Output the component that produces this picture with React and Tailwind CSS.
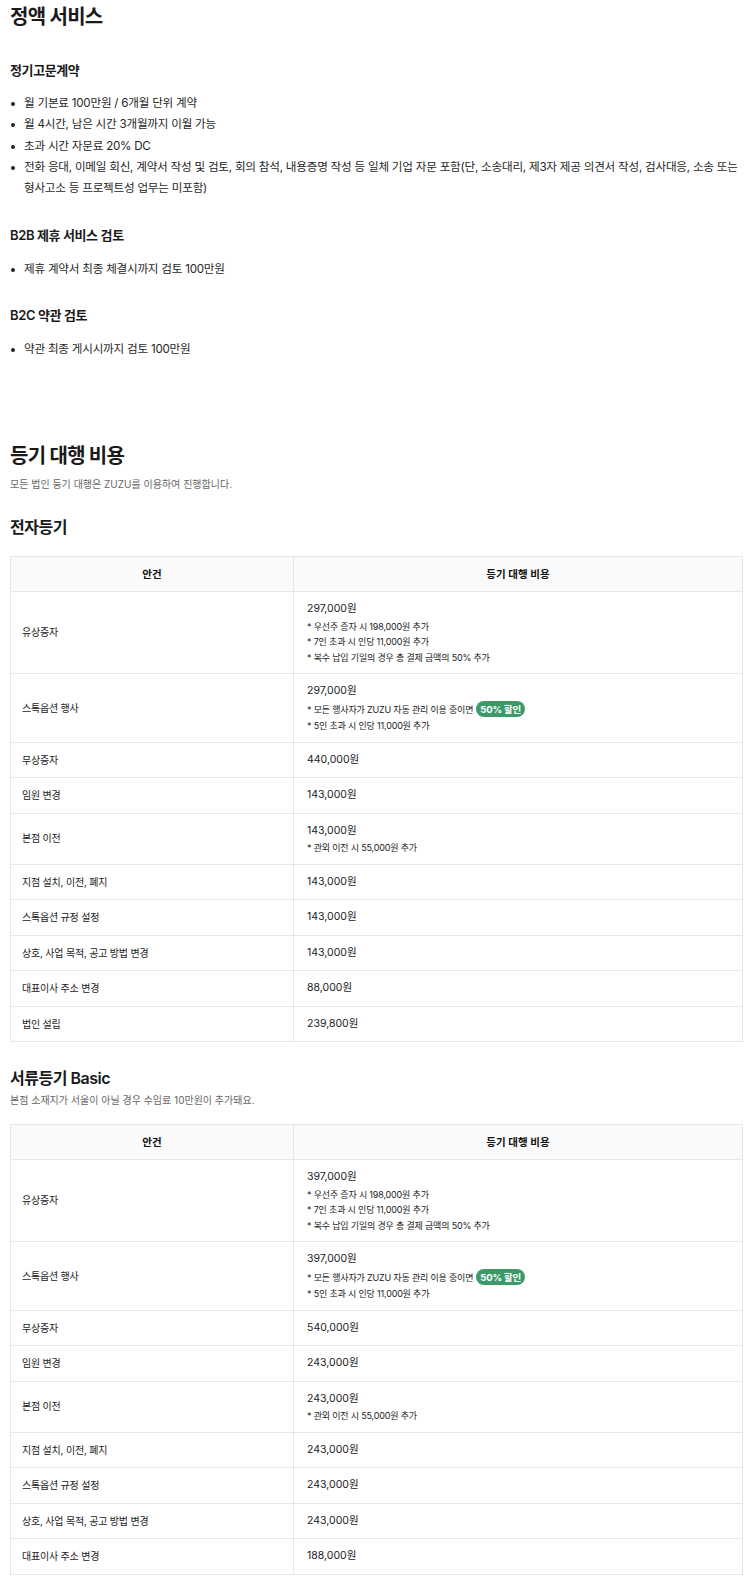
const FONT = { fontFamily: 'Inter, "Noto Sans CJK KR", sans-serif' };

const retainer = [
  "월 기본료 100만원 / 6개월 단위 계약",
  "월 4시간, 남은 시간 3개월까지 이월 가능",
  "초과 시간 자문료 20% DC",
  "전화 응대, 이메일 회신, 계약서 작성 및 검토, 회의 참석, 내용증명 작성 등 일체 기업 자문 포함(단, 소송대리, 제3자 제공 의견서 작성, 검사대응, 소송 또는 형사고소 등 프로젝트성 업무는 미포함)",
];

const electronic = [
  { name: "유상증자", price: "297,000원", notes: ["우선주 증자 시 198,000원 추가", "7인 초과 시 인당 11,000원 추가", "복수 납입 기일의 경우 총 결제 금액의 50% 추가"] },
  { name: "스톡옵션 행사", price: "297,000원", badge: true, notes: ["모든 행사자가 ZUZU 자동 관리 이용 중이면", "5인 초과 시 인당 11,000원 추가"] },
  { name: "무상증자", price: "440,000원" },
  { name: "임원 변경", price: "143,000원" },
  { name: "본점 이전", price: "143,000원", notes: ["관외 이전 시 55,000원 추가"] },
  { name: "지점 설치, 이전, 폐지", price: "143,000원" },
  { name: "스톡옵션 규정 설정", price: "143,000원" },
  { name: "상호, 사업 목적, 공고 방법 변경", price: "143,000원" },
  { name: "대표이사 주소 변경", price: "88,000원" },
  { name: "법인 설립", price: "239,800원" },
];

const paper = [
  { name: "유상증자", price: "397,000원", notes: ["우선주 증자 시 198,000원 추가", "7인 초과 시 인당 11,000원 추가", "복수 납입 기일의 경우 총 결제 금액의 50% 추가"] },
  { name: "스톡옵션 행사", price: "397,000원", badge: true, notes: ["모든 행사자가 ZUZU 자동 관리 이용 중이면", "5인 초과 시 인당 11,000원 추가"] },
  { name: "무상증자", price: "540,000원" },
  { name: "임원 변경", price: "243,000원" },
  { name: "본점 이전", price: "243,000원", notes: ["관외 이전 시 55,000원 추가"] },
  { name: "지점 설치, 이전, 폐지", price: "243,000원" },
  { name: "스톡옵션 규정 설정", price: "243,000원" },
  { name: "상호, 사업 목적, 공고 방법 변경", price: "243,000원" },
  { name: "대표이사 주소 변경", price: "188,000원" },
];

export default function App() {
  return (
    <div style={FONT} className="bg-white text-[#1a1a1a] px-[10px] w-[753px] h-[1582px] overflow-hidden">
      <h2 className="text-[20px] leading-[34px] font-bold tracking-[-0.035em]">정액 서비스</h2>

      <h3 className="mt-[26px] text-[13px] leading-[20px] font-semibold tracking-[-0.03em]">정기고문계약</h3>
      <Bullets items={retainer} className="mt-[13px]" />

      <h3 className="mt-[26px] text-[13px] leading-[20px] font-semibold tracking-[-0.03em]">B2B 제휴 서비스 검토</h3>
      <Bullets items={["제휴 계약서 최종 체결시까지 검토 100만원"]} className="mt-[14px]" />

      <h3 className="mt-[24px] text-[13px] leading-[20px] font-semibold tracking-[-0.03em]">B2C 약관 검토</h3>
      <Bullets items={["약관 최종 게시시까지 검토 100만원"]} className="mt-[14px]" />

      <h2 className="mt-[79px] text-[20px] leading-[34px] font-bold tracking-[-0.035em]">등기 대행 비용</h2>
      <p className="mt-[3px] text-[10px] leading-[16px] text-[#666]">모든 법인 등기 대행은 ZUZU를 이용하여 진행합니다.</p>

      <h3 className="mt-[22px] text-[16px] leading-[26px] font-semibold tracking-[-0.03em]">전자등기</h3>
      <FeeTable rows={electronic} className="mt-[16px]" />

      <h3 className="mt-[23px] text-[16px] leading-[26px] font-semibold tracking-[-0.03em]">서류등기 Basic</h3>
      <p className="mt-[1px] text-[10px] leading-[16px] text-[#666]">본점 소재지가 서울이 아닐 경우 수임료 10만원이 추가돼요.</p>
      <FeeTable rows={paper} className="mt-[16px]" />
    </div>
  );
}

function Bullets({ items, className }) {
  return (
    <ul className={className}>
      {items.map((t) => (
        <li key={t} className="flex text-[11.6px] leading-[21.3px] tracking-[-0.02em] text-[#1f1f1f]">
          <span className="w-[14px] shrink-0 flex items-start pl-[1px] pt-[9px]">
            <span className="w-[4px] h-[4px] rounded-full bg-[#222]" />
          </span>
          <span className="flex-1">{t}</span>
        </li>
      ))}
    </ul>
  );
}

function FeeTable({ rows, className }) {
  return (
    <table className={`w-full border-collapse border border-[#e3e6ea] ${className}`}>
      <thead>
        <tr className="bg-[#fafafa]">
          <th className="w-[283px] border border-[#e3e6ea] py-[7.5px] text-[10.5px] leading-[19px] font-semibold text-[#111]">안건</th>
          <th className="border border-[#e3e6ea] py-[7.5px] text-[10.5px] leading-[19px] font-semibold text-[#111]">등기 대행 비용</th>
        </tr>
      </thead>
      <tbody>
        {rows.map((r) => (
          <tr key={r.name}>
            <td className="border border-[#e3e6ea] px-[11px] py-[8px] text-[10px] leading-[18.5px] tracking-[-0.02em] text-[#222] align-middle">{r.name}</td>
            <td className="border border-[#e3e6ea] px-[13px] py-[8px] text-[#222] align-middle">
              <div className="text-[10.5px] leading-[18.5px]">{r.price}</div>
              {r.notes &&
                r.notes.map((n, i) => (
                  <div
                    key={n}
                    className={`text-[9px] tracking-[-0.02em] ${r.badge && i === 0 ? "leading-[17.5px] flex items-center gap-[3px]" : "leading-[15.5px]"}`}
                  >
                    <span>* {n}</span>
                    {r.badge && i === 0 && (
                      <span className="inline-flex items-center h-[16px] px-[4px] rounded-full bg-[#3c9a68] text-white text-[9.5px] font-bold tracking-[-0.02em]">
                        50% 할인
                      </span>
                    )}
                  </div>
                ))}
            </td>
          </tr>
        ))}
      </tbody>
    </table>
  );
}
